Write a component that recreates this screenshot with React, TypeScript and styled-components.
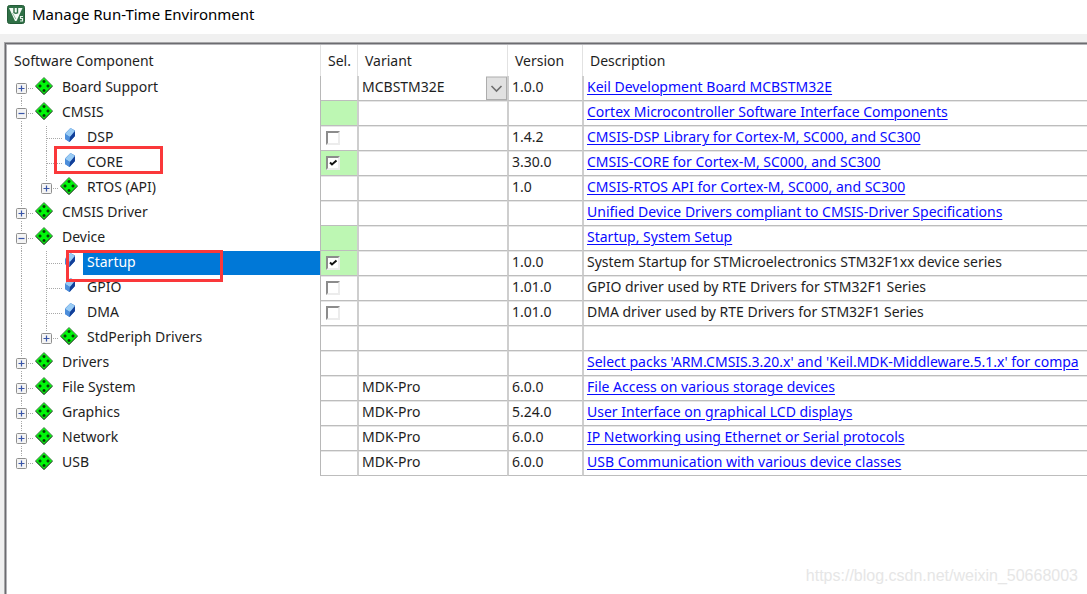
import React from 'react';
import styled, { createGlobalStyle, css } from 'styled-components';

const GlobalStyle = createGlobalStyle`
  * { box-sizing: border-box; }
  body {
    margin: 0;
    background: #f0f0f0;
    color: #1e1e1e;
    font-family: "Segoe UI", "Noto Sans", "Open Sans", sans-serif;
    font-size: 14px;
    overflow: hidden;
  }
`;

const Dialog = styled.main`
  position: relative;
  display: flex;
  flex-direction: column;
  min-height: 100vh;
`;

const TitleBar = styled.header`
  display: flex;
  align-items: center;
  gap: 7px;
  height: 34px;
  padding: 0 7px 6px;
  background: #fff;
`;

const Title = styled.h1`
  margin: 0;
  font-size: 15px;
  font-weight: 400;
  line-height: 20px;
  color: #000;
`;

const Panel = styled.section`
  flex: 1;
  margin: 8px 0 0 4px;
  border: 1px solid #a6a6a8;
  border-width: 1px 0 0 1px;
  background: #fff;
  box-shadow: inset 1px 1px 0 #6c6c70, inset 2px 2px 0 #b4b4b8;
  padding: 2px 0 0 2px;
`;

const Grid = styled.table`
  width: 100%;
  table-layout: fixed;
  border-collapse: separate;
  border-spacing: 0;
`;

const Col = styled.col<{ $width?: number }>`
  ${({ $width }) => $width && `width: ${$width}px;`}
`;

const HeadCell = styled.th<{ $first?: boolean }>`
  height: 31px;
  padding: 1px 0 0 7px;
  text-align: left;
  font-weight: 400;
  line-height: 20px;
  white-space: nowrap;
  ${({ $first }) => !$first && `border-left: 1px solid #e2e2e2;`}
`;

const TreeCell = styled.td`
  position: relative;
  height: 25px;
  padding: 0 0 0 2px;
`;

const TreeLine = styled.div`
  display: flex;
  align-items: stretch;
  height: 25px;
`;

const Slot = styled.svg<{ $width: number }>`
  flex: none;
  display: block;
  width: ${({ $width }) => $width}px;
  height: 25px;
`;

const NodeLabel = styled.span<{ $selected?: boolean }>`
  flex: 1;
  margin-left: 4px;
  padding-left: 4px;
  line-height: 22px;
  white-space: nowrap;
  ${({ $selected }) =>
    $selected &&
    css`
      background: #0078d7;
      background-clip: padding-box;
      border-bottom: 1px solid #fff;
      color: #fff;
    `}
`;

const Marker = styled.span<{ $wide?: boolean }>`
  position: absolute;
  z-index: 1;
  top: ${({ $wide }) => ($wide ? -1 : -5)}px;
  left: ${({ $wide }) => ($wide ? 59 : 47)}px;
  width: ${({ $wide }) => ($wide ? 157 : 109)}px;
  height: ${({ $wide }) => ($wide ? 32 : 28)}px;
  border: 3px solid #fa383a;
`;

const Cell = styled.td<{ $sel?: boolean; $green?: boolean; $flush?: boolean; $top?: boolean }>`
  height: 25px;
  padding: 0 0 0 ${({ $flush, $sel }) => ($flush ? 0 : $sel ? 4 : 3)}px;
  border-left: ${({ $sel }) => ($sel ? '1px solid #b8b8b8' : '2px solid #cecece')};
  border-bottom: 1px solid #bdbdbd;
  line-height: 20px;
  white-space: nowrap;
  overflow: hidden;
  background: ${({ $green }) => ($green ? '#bdf7b3' : '#fff')};
  ${({ $top, $green }) => !$top && !$green && `box-shadow: inset 0 1px 0 #e6e6e6;`}
`;

const TextLine = styled.div`
  height: 24px;
  line-height: 22px;
`;

const Link = styled.a`
  color: #0a0aff;
  text-decoration: underline;
  text-decoration-thickness: 1px;
  text-underline-offset: 2px;
`;

const CheckWrap = styled.label`
  display: grid;
  width: 14px;
  height: 14px;
  margin: 0 0 1px 1px;
  & > * { grid-area: 1 / 1; }
`;

const Check = styled.input`
  appearance: none;
  width: 14px;
  height: 14px;
  margin: 0;
  background: #fff;
  border: 2px solid;
  border-color: #8c8c8c #ececec #ececec #8c8c8c;
`;

const Tick = styled.svg`
  width: 14px;
  height: 14px;
  pointer-events: none;
`;

const Combo = styled.div`
  display: grid;
  height: 24px;
  & > * { grid-area: 1 / 1; }
`;

const Select = styled.select`
  appearance: none;
  width: 100%;
  height: 22px;
  padding: 0 24px 0 3px;
  border: 0;
  background: transparent;
  color: inherit;
  font: inherit;
  line-height: 20px;
`;

const Arrow = styled.svg`
  justify-self: end;
  width: 21px;
  height: 24px;
  pointer-events: none;
`;

const Watermark = styled.span`
  position: absolute;
  right: 9px;
  bottom: 9px;
  font-family: "Liberation Sans", Arial, sans-serif;
  font-size: 16px;
  line-height: 18px;
  color: #e6e6e6;
`;

type Kind = 'group' | 'leaf';

interface Row {
  name: string;
  level?: 1;
  kind?: Kind;
  open?: boolean;
  first?: boolean;
  last?: boolean;
  green?: boolean;
  checked?: boolean;
  selected?: boolean;
  marked?: 'narrow' | 'wide';
  combo?: boolean;
  variant?: string;
  version?: string;
  text?: string;
  plain?: boolean;
}

const rows: Row[] = [
  { name: 'Board Support', first: true, combo: true, variant: 'MCBSTM32E', version: '1.0.0', text: 'Keil Development Board MCBSTM32E' },
  { name: 'CMSIS', open: true, green: true, text: 'Cortex Microcontroller Software Interface Components' },
  { name: 'DSP', level: 1, kind: 'leaf', checked: false, version: '1.4.2', text: 'CMSIS-DSP Library for Cortex-M, SC000, and SC300' },
  { name: 'CORE', level: 1, kind: 'leaf', checked: true, green: true, marked: 'narrow', version: '3.30.0', text: 'CMSIS-CORE for Cortex-M, SC000, and SC300' },
  { name: 'RTOS (API)', level: 1, last: true, version: '1.0', text: 'CMSIS-RTOS API for Cortex-M, SC000, and SC300' },
  { name: 'CMSIS Driver', text: 'Unified Device Drivers compliant to CMSIS-Driver Specifications' },
  { name: 'Device', open: true, green: true, text: 'Startup, System Setup' },
  { name: 'Startup', level: 1, kind: 'leaf', checked: true, green: true, selected: true, marked: 'wide', version: '1.0.0', text: 'System Startup for STMicroelectronics STM32F1xx device series', plain: true },
  { name: 'GPIO', level: 1, kind: 'leaf', checked: false, version: '1.01.0', text: 'GPIO driver used by RTE Drivers for STM32F1 Series', plain: true },
  { name: 'DMA', level: 1, kind: 'leaf', checked: false, version: '1.01.0', text: 'DMA driver used by RTE Drivers for STM32F1 Series', plain: true },
  { name: 'StdPeriph Drivers', level: 1, last: true },
  { name: 'Drivers', text: "Select packs 'ARM.CMSIS.3.20.x' and 'Keil.MDK-Middleware.5.1.x' for compa" },
  { name: 'File System', variant: 'MDK-Pro', version: '6.0.0', text: 'File Access on various storage devices' },
  { name: 'Graphics', variant: 'MDK-Pro', version: '5.24.0', text: 'User Interface on graphical LCD displays' },
  { name: 'Network', variant: 'MDK-Pro', version: '6.0.0', text: 'IP Networking using Ethernet or Serial protocols' },
  { name: 'USB', last: true, variant: 'MDK-Pro', version: '6.0.0', text: 'USB Communication with various device classes' },
];

const Dots = ({ d }: { d: string }) => (
  <path d={d} fill="none" stroke="#a8a8a8" strokeWidth="1" strokeDasharray="1 1" />
);

/* One 25px tree column: the dotted guides and, for a group, its +/- box. */
function Guide({ row, through }: { row: Row; through?: boolean }) {
  if (through) {
    return (
      <Slot $width={25} viewBox="0 0 25 25" aria-hidden>
        <Dots d="M12.5 0V25" />
      </Slot>
    );
  }
  const leaf = row.kind === 'leaf';
  return (
    <Slot $width={25} viewBox="0 0 25 25" aria-hidden>
      <Dots d={`M12.5 ${row.first ? 12 : 0}V${row.last ? 12 : 25}`} />
      <Dots d="M13 12.5H25" />
      {!leaf && (
        <>
          <path d="M12.5 5V19" stroke="#fff" strokeWidth="2" />
          <rect x="7.5" y="7.5" width="10" height="10" rx="1" fill="#f4f4f4" stroke="#8f8f8f" />
          <path d={row.open ? 'M9.5 12.5H15.5' : 'M9.5 12.5H15.5M12.5 9.5V15.5'} stroke="#3a56a8" strokeWidth="1.2" />
        </>
      )}
    </Slot>
  );
}

const GroupIcon = () => (
  <Slot $width={20} viewBox="0 0 20 25" aria-hidden>
    <path d="M10 1.5L18.5 10L10 18.5L1.5 10Z" fill="#00f80a" stroke="#4a7a4c" />
    <path d="M2 10.5L10 18.5L18 10.5" fill="none" stroke="#1f4a22" />
    <path
      d="M10 4V7M8.500 5.500H11.500M6 8.500V11.500M4.500 10H7.500M14 8.500V11.500M12.500 10H15.500M10 13V16M8.500 14.500H11.500"
      stroke="#053a07"
      strokeWidth="1.5"
    />
  </Slot>
);

const LeafIcon = () => (
  <Slot $width={20} viewBox="0 0 20 25" aria-hidden>
    <path d="M0 12.5H4" stroke="#a8a8a8" strokeDasharray="1 1" />
    <path d="M11.5 2L16 4.5V10L10.5 16L6 13V7.500Z" fill="#3f7fd0" />
    <path d="M11.5 2L16 5L11 11L6 8Z" fill="#9accf5" />
    <path d="M6 8L11 11L10.5 16L6 13Z" fill="#4d8edb" />
    <path d="M16 5V10L10.5 16L11 11Z" fill="#123f98" />
  </Slot>
);

const Logo = () => (
  <svg width="18" height="19" viewBox="0 0 18 19" aria-hidden>
    <rect x="0.5" y="0.5" width="17" height="18" rx="2" fill="#2f7046" stroke="#245c38" />
    <path d="M2 3H15.5L9.5 16H8Z" fill="#f4faf5" />
    <path d="M7 3V8M7 7.5Q9 9 10.5 7.5M10.5 3V8.5" fill="none" stroke="#2f7046" strokeWidth="1.4" />
    <path d="M5.5 8L8.8 14" stroke="#7fae8e" strokeWidth="0.8" />
    <path d="M16 11.5H13.5V13.5H15.5V16H13" fill="none" stroke="#e6f2e9" strokeWidth="1.2" />
  </svg>
);

function ComponentRow({ row }: { row: Row }) {
  const sub = row.level === 1;
  return (
    <tr>
      <TreeCell>
        <TreeLine>
          {sub && <Guide row={row} through />}
          <Guide row={row} />
          {row.kind === 'leaf' ? <LeafIcon /> : <GroupIcon />}
          <NodeLabel $selected={row.selected}>{row.name}</NodeLabel>
        </TreeLine>
        {row.marked && <Marker $wide={row.marked === 'wide'} />}
      </TreeCell>
      <Cell $sel $green={row.green} $top={row.first}>
        {row.checked !== undefined && (
          <CheckWrap>
            <Check type="checkbox" defaultChecked={row.checked} aria-label={`Select ${row.name}`} />
            {row.checked && (
              <Tick viewBox="0 0 14 14">
                <path d="M4 6.5L6 8.5L10.500 4.500" fill="none" stroke="#111" strokeWidth="2" />
              </Tick>
            )}
          </CheckWrap>
        )}
      </Cell>
      <Cell $flush={row.combo} $top={row.first}>
        {row.combo ? (
          <Combo>
            <Select aria-label={`${row.name} variant`} defaultValue={row.variant}>
              <option>{row.variant}</option>
            </Select>
            <Arrow viewBox="0 0 21 24">
              <rect x="0.5" y="1" width="20" height="22.5" fill="#e1e1e1" stroke="#adadad" />
              <path d="M5.5 10L10.500 15L15.500 10" fill="none" stroke="#6e6e6e" strokeWidth="1.6" />
            </Arrow>
          </Combo>
        ) : (
          <TextLine>{row.variant}</TextLine>
        )}
      </Cell>
      <Cell $top={row.first}>
        <TextLine>{row.version}</TextLine>
      </Cell>
      <Cell $top={row.first}>
        <TextLine>{row.plain || !row.text ? row.text : <Link href="#">{row.text}</Link>}</TextLine>
      </Cell>
    </tr>
  );
}

export default function App() {
  return (
    <>
      <GlobalStyle />
      <Dialog>
        <TitleBar>
          <Logo />
          <Title>Manage Run-Time Environment</Title>
        </TitleBar>
        <Panel>
          <Grid>
            <colgroup>
              <Col $width={313} />
              <Col $width={37} />
              <Col $width={150} />
              <Col $width={75} />
              <Col />
            </colgroup>
            <thead>
              <tr>
                <HeadCell $first>Software Component</HeadCell>
                <HeadCell>Sel.</HeadCell>
                <HeadCell>Variant</HeadCell>
                <HeadCell>Version</HeadCell>
                <HeadCell>Description</HeadCell>
              </tr>
            </thead>
            <tbody>
              {rows.map((row) => (
                <ComponentRow key={row.name} row={row} />
              ))}
            </tbody>
          </Grid>
        </Panel>
        <Watermark>https://blog.csdn.net/weixin_50668003</Watermark>
      </Dialog>
    </>
  );
}
